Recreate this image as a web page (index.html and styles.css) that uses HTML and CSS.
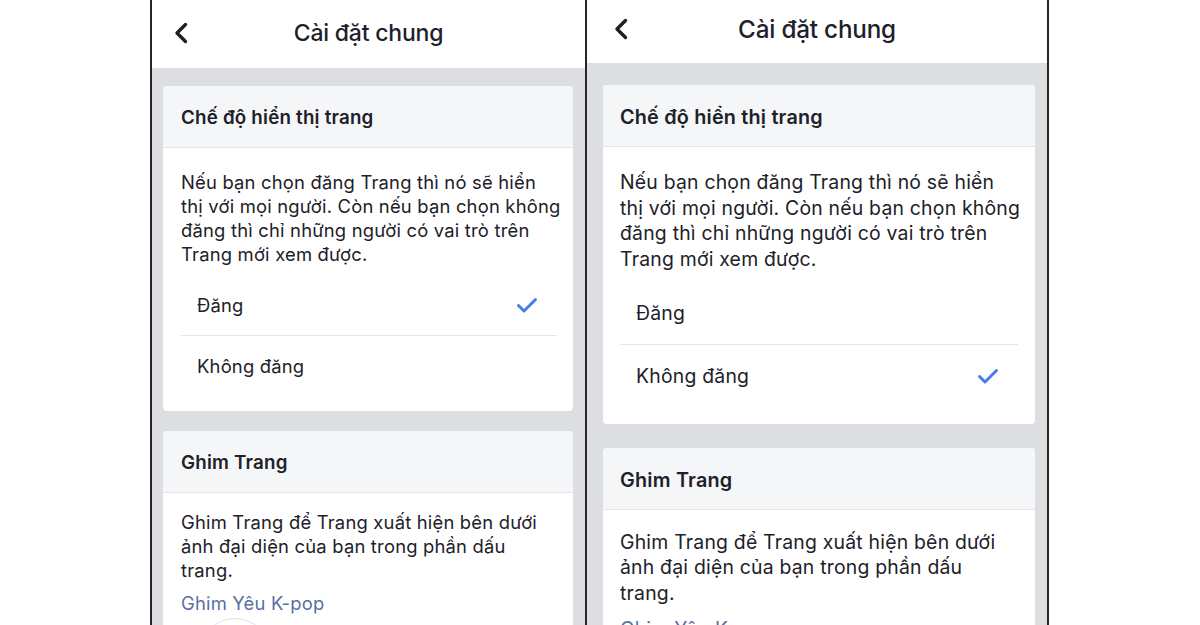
FILE: index.html
```html
<!DOCTYPE html>
<html>
<head>
    <meta name="viewport" content="width=device-width">
    <link rel="stylesheet" href="styles.css">
</head>
<body>
    <div class="screens">
        <section class="phone phone-a">
            <div class="nav">
                <svg class="back" width="14" height="22" viewBox="0 0 14 22"><polyline points="11.5,2.5 3,11 11.5,19.5" fill="none" stroke="#1d2129" stroke-width="3.4" stroke-linecap="round" stroke-linejoin="round"/></svg>
                <h1>Cài đặt chung</h1>
                <span></span>
            </div>
            <div class="feed">
                <div class="card">
                    <div class="card-head">Chế độ hiển thị trang</div>
                    <div class="card-body">
                        <p>Nếu bạn chọn đăng Trang thì nó sẽ hiển<br>thị với mọi người. Còn nếu bạn chọn không<br>đăng thì chỉ những người có vai trò trên<br>Trang mới xem được.</p>
                        <ul class="options">
                            <li>Đăng <svg class="check" width="22" height="17" viewBox="0 0 22 17"><polyline points="2.5,8.5 8,14 19.5,2.5" fill="none" stroke="#4a7be6" stroke-width="3" stroke-linecap="round" stroke-linejoin="round"/></svg></li>
                            <li>Không đăng</li>
                        </ul>
                    </div>
                </div>
                <div class="card">
                    <div class="card-head">Ghim Trang</div>
                    <div class="card-body pin-body">
                        <p>Ghim Trang để Trang xuất hiện bên dưới<br>ảnh đại diện của bạn trong phần dấu<br>trang.</p>
                        <a class="pin">Ghim Yêu K-pop</a>
                        <div class="avatar"></div>
                    </div>
                </div>
            </div>
        </section>
        <section class="phone phone-b">
            <div class="nav">
                <svg class="back" width="14" height="22" viewBox="0 0 14 22"><polyline points="11.5,2.5 3,11 11.5,19.5" fill="none" stroke="#1d2129" stroke-width="3.4" stroke-linecap="round" stroke-linejoin="round"/></svg>
                <h1>Cài đặt chung</h1>
                <span></span>
            </div>
            <div class="feed">
                <div class="card">
                    <div class="card-head">Chế độ hiển thị trang</div>
                    <div class="card-body">
                        <p>Nếu bạn chọn đăng Trang thì nó sẽ hiển<br>thị với mọi người. Còn nếu bạn chọn không<br>đăng thì chỉ những người có vai trò trên<br>Trang mới xem được.</p>
                        <ul class="options">
                            <li>Đăng</li>
                            <li>Không đăng <svg class="check" width="22" height="17" viewBox="0 0 22 17"><polyline points="2.5,8.5 8,14 19.5,2.5" fill="none" stroke="#4a7be6" stroke-width="3" stroke-linecap="round" stroke-linejoin="round"/></svg></li>
                        </ul>
                    </div>
                </div>
                <div class="card">
                    <div class="card-head">Ghim Trang</div>
                    <div class="card-body pin-body">
                        <p>Ghim Trang để Trang xuất hiện bên dưới<br>ảnh đại diện của bạn trong phần dấu<br>trang.</p>
                        <a class="pin">Ghim Yêu K-pop</a>
                        <div class="avatar"></div>
                    </div>
                </div>
            </div>
        </section>
    </div>
</body>
</html>
```

FILE: styles.css
```css
html, body {
    margin: 0;
    height: 625px;
    overflow: hidden;
    background: #ffffff;
}
body {
    font-family: Inter, "Liberation Sans", sans-serif;
    color: #1d2129;
}
.screens {
    display: flex;
    align-items: flex-start;
    margin-left: 150px;
}
.phone {
    display: flex;
    flex-direction: column;
    height: 625px;
    overflow: hidden;
    background: #dcdee2;
    border-right: 2px solid #262626;
    letter-spacing: 0.011em;
}
.phone-a {
    width: 433px;
    font-size: 18.4px;
    border-left: 2px solid #262626;
}
.phone-b {
    width: 460px;
    font-size: 19.4px;
}
.nav {
    flex-shrink: 0;
    display: grid;
    grid-template-columns: 1fr auto 1fr;
    align-items: center;
    background: #ffffff;
    height: 68px;
    padding: 0 22px 2px;
    box-sizing: border-box;
}
.phone-b .nav { height: 63px; padding: 0 27px 5px; }
.nav h1 {
    margin: 0;
    font-size: 1.25em;
    font-weight: 500;
    letter-spacing: -0.2px;
}
.feed {
    flex-shrink: 0;
    padding: 18px 12px 0 11px;
}
.phone-b .feed { padding: 22px 12px 0 16px; }
.card {
    background: #ffffff;
    border-radius: 4px;
    overflow: hidden;
    margin-bottom: 1.1em;
}
.phone-b .card { margin-bottom: 24px; }
.card-head {
    display: flex;
    align-items: center;
    padding: 2px 18px 0;
    box-sizing: border-box;
    height: 62px;
    background: #f5f6f7;
    border-bottom: 1px solid #e4e6e9;
    font-weight: 600;
    font-size: 1.02em;
}
.phone-b .card-head { padding: 2px 17px 0; }
.card-body {
    padding: 1.2em 16px 0.85em 18px;
}
.card-body.pin-body { padding-top: 0.92em; }
.phone-b .card-body { padding-left: 17px; padding-right: 17px; }
.phone-b .card-body.pin-body { padding-top: 1.02em; }
.card-body p {
    margin: 0;
    line-height: 1.31;
    white-space: nowrap;
}
.options {
    list-style: none;
    margin: 0.5em 0 0;
    padding: 0;
}
.options li {
    display: flex;
    align-items: center;
    justify-content: space-between;
    height: 3.22em;
    padding: 0 19px 0 16px;
}
.options li + li { border-top: 1px solid #e5e6e9; }
.pin {
    display: block;
    margin-top: 0.55em;
    color: #5a6fa6;
}
.avatar {
    width: 70px;
    height: 70px;
    margin: 4px 0 0 18px;
    border-radius: 50%;
    border: 1px solid #e2e2e2;
}
```
